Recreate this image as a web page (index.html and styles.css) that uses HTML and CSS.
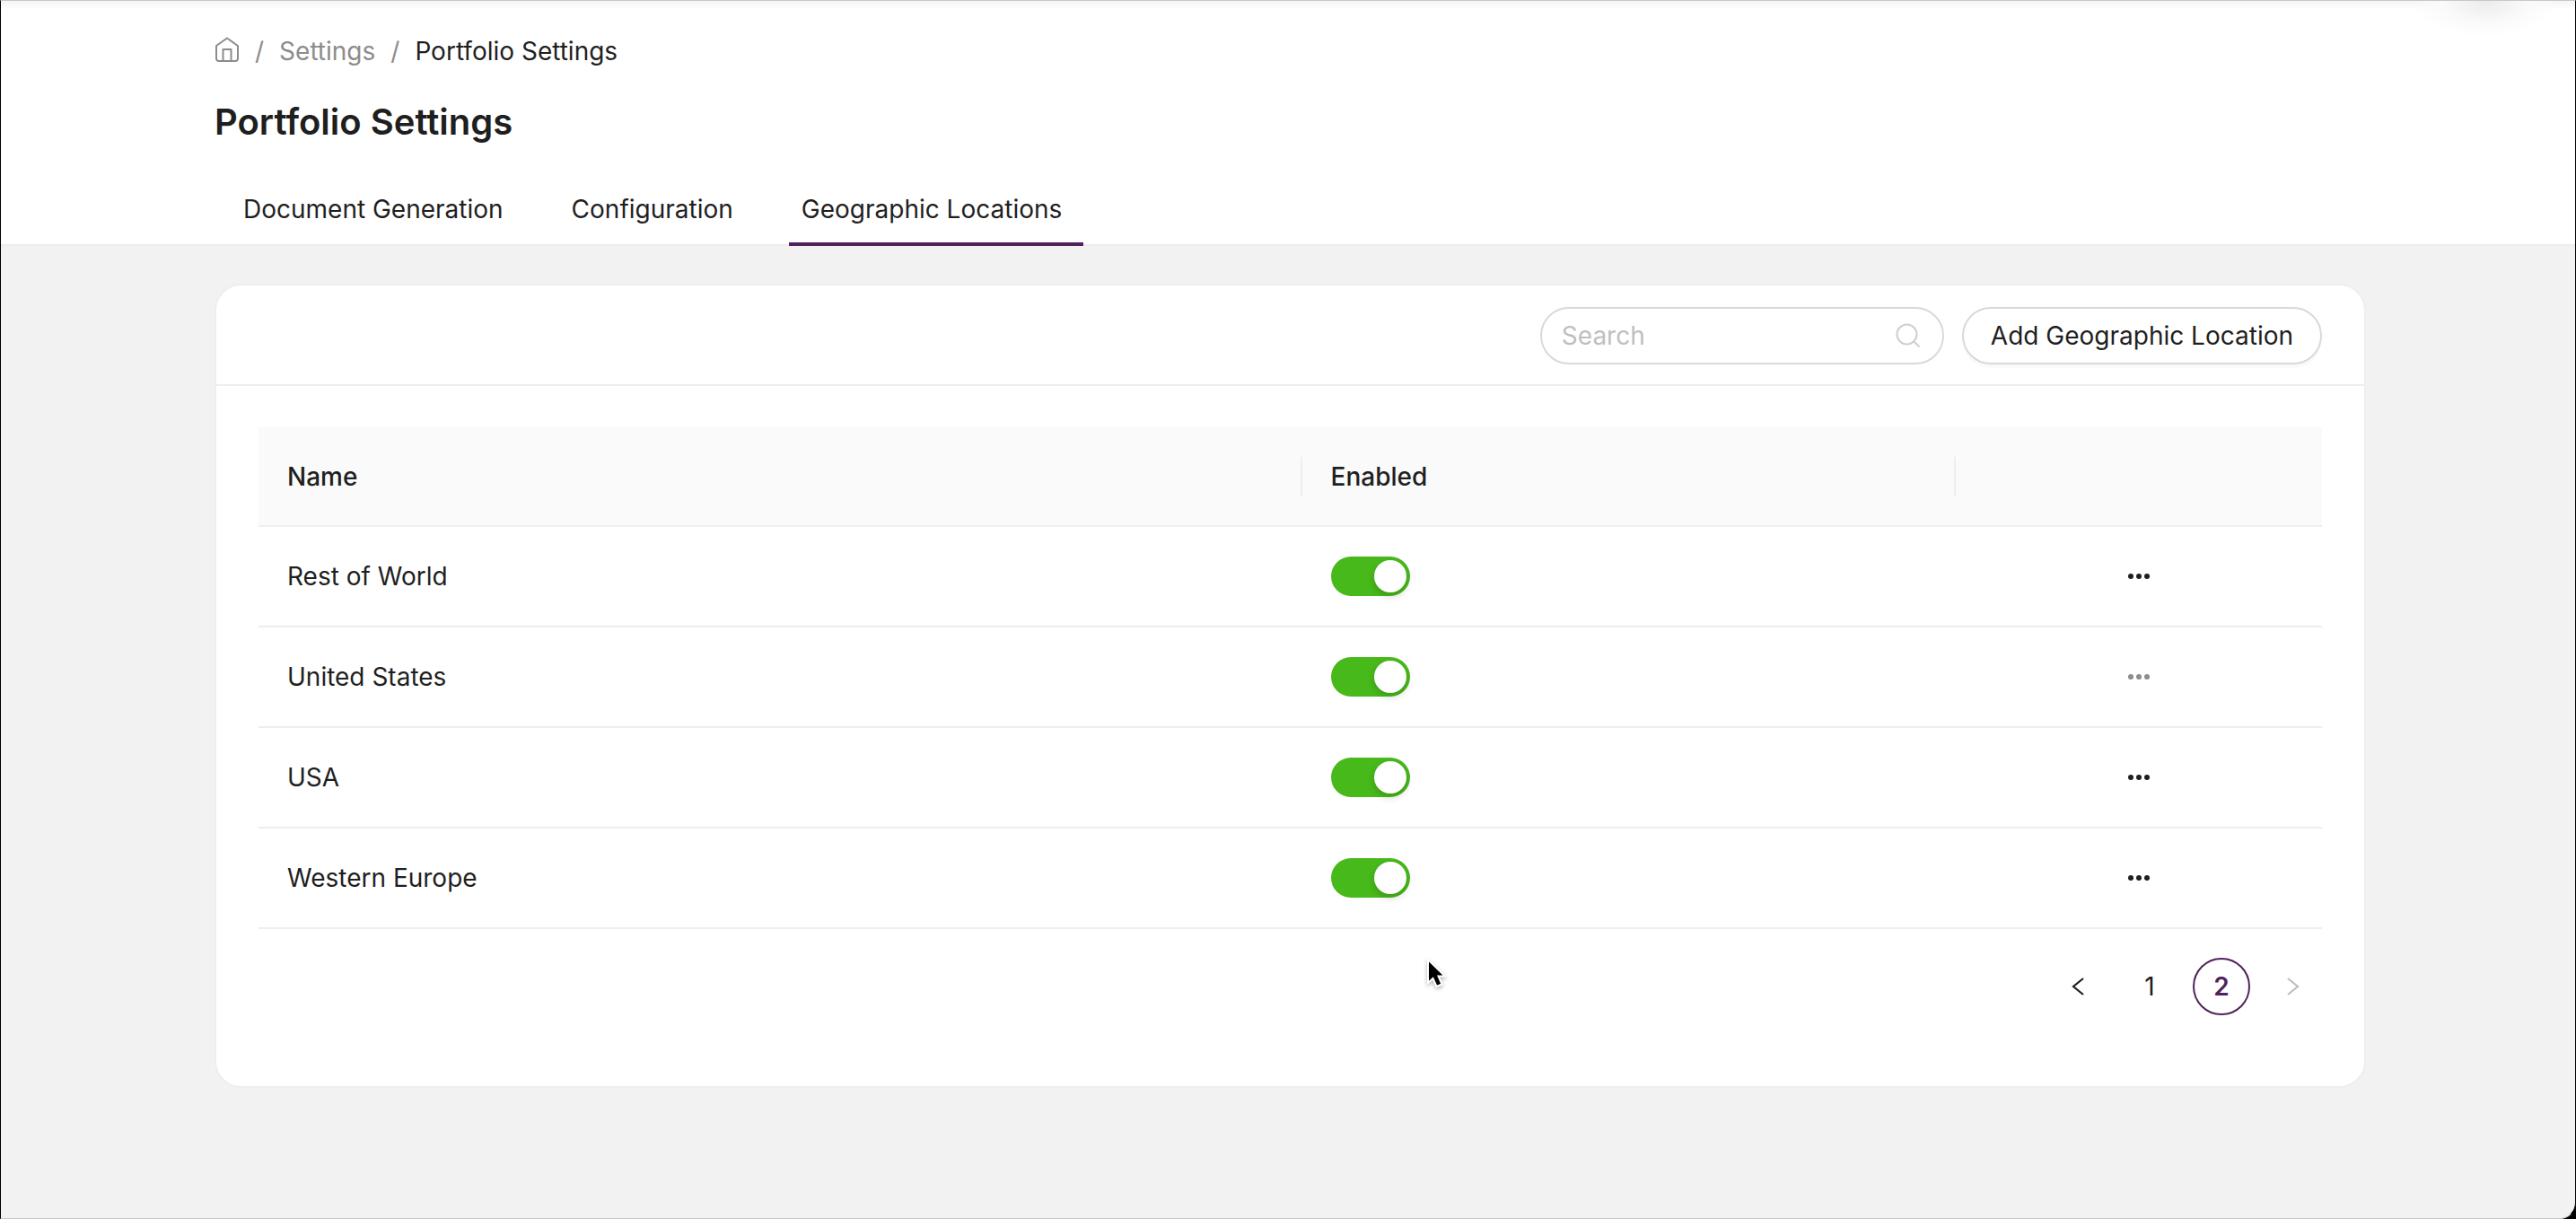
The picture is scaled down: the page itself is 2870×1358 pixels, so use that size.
FILE: index.html
```html
<!DOCTYPE html>
<html lang="en">
<head>
  <meta charset="UTF-8" />
  <meta name="viewport" content="width=device-width, initial-scale=1.0"/>
  <title>Portfolio Settings</title>
  <link rel="stylesheet" href="styles.css">
</head>
<body>
  <header class="page-header">
    <nav class="breadcrumb" aria-label="Breadcrumb">
      <a href="#" class="home" aria-label="Home">
        <svg width="28" height="28" viewBox="0 0 28 28" fill="none" stroke="currentColor" stroke-width="2" stroke-linejoin="round">
          <path d="M2 10 14 1.500 26 10V24a3 3 0 0 1-3 3H5a3 3 0 0 1-3-3z"/>
          <path d="M9.500 27V14h9V27"/>
        </svg>
      </a>
      <span class="slash">/</span>
      <a href="#">Settings</a>
      <span class="slash">/</span>
      <span class="current">Portfolio Settings</span>
    </nav>
    <h1>Portfolio Settings</h1>
    <nav class="tabs">
      <a href="#" class="tab">Document Generation</a>
      <a href="#" class="tab">Configuration</a>
      <a href="#" class="tab active">Geographic Locations</a>
    </nav>
  </header>

  <main class="content">
    <section class="card">
      <div class="card-head">
        <label class="search">
          <input type="text" placeholder="Search" aria-label="Search" />
          <svg width="28" height="28" viewBox="0 0 28 28" fill="none" stroke="currentColor" stroke-width="2">
            <circle cx="12.500" cy="12.500" r="11"/>
            <path d="M20.500 20.500l6 6"/>
          </svg>
        </label>
        <button type="button" class="add-btn">Add Geographic Location</button>
      </div>

      <div class="card-body">
        <table class="locations">
          <colgroup>
            <col class="col-name">
            <col class="col-enabled">
            <col class="col-actions">
          </colgroup>
          <thead>
            <tr>
              <th>Name</th>
              <th>Enabled</th>
              <th></th>
            </tr>
          </thead>
          <tbody>
            <tr>
              <td>Rest of World</td>
              <td><input type="checkbox" class="switch" aria-label="Enable Rest of World" checked /></td>
              <td><button type="button" class="more" aria-label="Actions"><i></i><i></i><i></i></button></td>
            </tr>
            <tr>
              <td>United States</td>
              <td><input type="checkbox" class="switch" aria-label="Enable United States" checked /></td>
              <td><button type="button" class="more muted" aria-label="Actions"><i></i><i></i><i></i></button></td>
            </tr>
            <tr>
              <td>USA</td>
              <td><input type="checkbox" class="switch" aria-label="Enable USA" checked /></td>
              <td><button type="button" class="more" aria-label="Actions"><i></i><i></i><i></i></button></td>
            </tr>
            <tr>
              <td>Western Europe</td>
              <td><input type="checkbox" class="switch" aria-label="Enable Western Europe" checked /></td>
              <td><button type="button" class="more" aria-label="Actions"><i></i><i></i><i></i></button></td>
            </tr>
          </tbody>
        </table>

        <nav class="pagination" aria-label="Pages">
          <button type="button" class="page" aria-label="Previous page">
            <svg width="16" height="22" viewBox="0 0 16 22" fill="none" stroke="currentColor" stroke-width="2.200"><path d="M14 2 3 11 14 20"/></svg>
          </button>
          <button type="button" class="page">1</button>
          <button type="button" class="page active">2</button>
          <button type="button" class="page" aria-label="Next page" disabled>
            <svg width="16" height="22" viewBox="0 0 16 22" fill="none" stroke="currentColor" stroke-width="2.200"><path d="M2 2 13 11 2 20"/></svg>
          </button>
        </nav>
      </div>
    </section>
  </main>

  <svg class="cursor" width="24" height="36" viewBox="0 0 24 36">
    <path d="M3 3v26l5.500-5 4 9 6-2.500-4-9H22z" fill="#000" stroke="#fff" stroke-width="2"/>
  </svg>
</body>
</html>
```

FILE: styles.css
```css
* {
  box-sizing: border-box;
}
html {
  background-color: #000;
}
body {
  margin: 0;
  min-height: 100vh;
  font-family: Inter, sans-serif;
  font-size: 28px;
  line-height: 44px;
  color: #1f1f1f;
  background-color: #f2f2f2;
  border: 1px solid #c8c8c8;
  border-left-color: #000;
  border-right-color: #000;
  border-bottom-right-radius: 18px;
}
a {
  color: inherit;
  text-decoration: none;
}
button,
input {
  font: inherit;
  color: inherit;
}

/* header */
.page-header {
  padding: 34px 233px 0 238px;
  background:
    radial-gradient(ellipse 80px 40px at calc(100% - 100px) 0, #ebebeb, #fafafa 60%, transparent),
    linear-gradient(#f5f5f7, #fff 10px);
  border-bottom: 2px solid #ededed;
}
.breadcrumb {
  display: flex;
  align-items: center;
  gap: 17px;
  color: #8c8c8c;
}
.home {
  display: flex;
  height: 32px;
}
.current {
  color: #1f1f1f;
}
h1 {
  margin: 27px 0 0;
  font-size: 40px;
  line-height: 60px;
  font-weight: 600;
}
.tabs {
  display: flex;
  gap: 38px;
  margin: 23px 0 -2px 18px;
}
.tab {
  padding: 22px 24px 15px 14px;
  border-bottom: 4px solid transparent;
}
.tab.active {
  border-color: #4f2259;
}

/* card */
.content {
  padding: 42px 233px 0 238px;
}
.card {
  background-color: #fff;
  border: 2px solid #eee;
  border-radius: 30px;
}
.card-head {
  display: flex;
  justify-content: flex-end;
  gap: 20px;
  padding: 24px 47px 22px;
  border-bottom: 2px solid #eee;
}
.search {
  display: flex;
  align-items: center;
  width: 450px;
  height: 64px;
  padding: 0 24px 0 22px;
  border: 2px solid #d9d9d9;
  border-radius: 32px;
  color: #cfcfcf;
}
.search input {
  flex: 1;
  min-width: 0;
  padding: 0;
  border: none;
  outline: none;
  background: none;
  color: #1f1f1f;
}
.search input::placeholder {
  color: #bfbfbf;
}
.add-btn {
  height: 64px;
  padding: 0 30px;
  background-color: #fff;
  border: 2px solid #d9d9d9;
  border-radius: 32px;
  box-shadow: 0 4px 0 rgba(0, 0, 0, 0.02);
}
.card-body {
  padding: 46px 47px 79px;
}

/* table */
.locations {
  width: 100%;
  border-collapse: separate;
  border-spacing: 0;
  table-layout: fixed;
}
.col-name {
  width: 50.57%;
}
.col-enabled {
  width: 31.7%;
}
.locations th {
  height: 111px;
  padding: 0 32px;
  text-align: left;
  font-weight: 500;
  background: #fafafa;
  border-bottom: 2px solid #eee;
}
.locations th:not(:last-child) {
  background: linear-gradient(#eee, #eee) right center / 2px 44px no-repeat #fafafa;
}
.locations td {
  height: 112px;
  padding: 0 32px;
  border-bottom: 2px solid #eee;
}
.switch {
  appearance: none;
  display: block;
  width: 88px;
  height: 44px;
  margin: 0;
  padding: 4px;
  border-radius: 22px;
  background-color: #bfbfbf;
}
.switch::before {
  content: "";
  display: block;
  width: 36px;
  height: 36px;
  border-radius: 50%;
  background-color: #fff;
  box-shadow: 0 4px 8px rgba(0, 35, 11, 0.2);
}
.switch:checked {
  background-color: #48b91a;
}
.switch:checked::before {
  margin-left: auto;
}
.more {
  display: flex;
  gap: 3px;
  margin: 0 auto;
  padding: 8px;
  border: none;
  background: none;
}
.more i {
  width: 6px;
  height: 6px;
  border-radius: 50%;
  background-color: currentColor;
}
.more.muted {
  color: #8c8c8c;
}

/* pagination */
.pagination {
  display: flex;
  justify-content: flex-end;
  gap: 16px;
  margin-top: 32px;
}
.page {
  display: flex;
  align-items: center;
  justify-content: center;
  width: 64px;
  height: 64px;
  padding: 0;
  border: 2px solid transparent;
  border-radius: 50%;
  background: none;
}
.page.active {
  color: #4f2259;
  border-color: #4f2259;
  font-weight: 600;
}
.page:disabled {
  color: #bfbfbf;
}

/* mouse pointer over the page */
.cursor {
  position: absolute;
  left: 1588px;
  top: 1066px;
  filter: drop-shadow(0 2px 2px rgba(0, 0, 0, 0.3));
}
```
